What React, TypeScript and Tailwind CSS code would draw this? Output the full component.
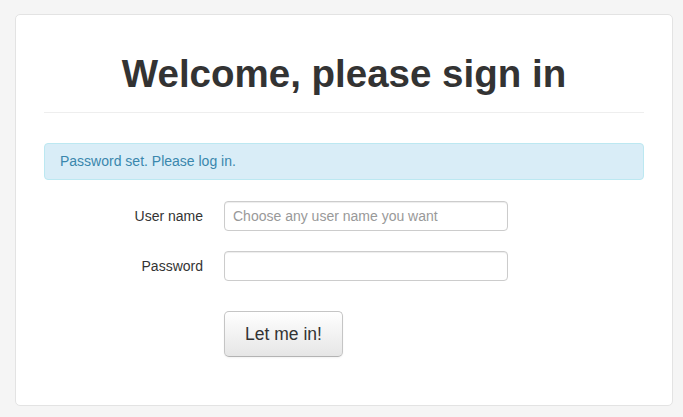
export default function App() {
  return (
    <div
      className="min-h-[417px] bg-[#f5f5f5] pt-[14px] pl-[15px]"
      style={{ fontFamily: '"Liberation Sans", Arial, sans-serif' }}
    >
      <div className="w-[658px] h-[392px] bg-white border border-[#e3e3e3] rounded-[5px] px-[28px] pt-[39px]">
        {/* Heading */}
        <h1 className="text-center text-[38.5px] leading-[40px] font-bold text-[#333]">
          Welcome, please sign in
        </h1>
        <div className="mt-[18px] h-px bg-[#eeeeee]" />

        {/* Alert */}
        <div className="mt-[30px] h-[37px] flex items-center px-[15px] bg-[#d9edf7] border border-[#bce8f1] rounded-[4px] text-[14px] text-[#3a87ad]">
          Password set. Please log in.
        </div>

        {/* Form */}
        <div className="mt-[21px] flex flex-col gap-[20px]">
          <div className="flex items-center">
            <label className="w-[160px] text-right pr-px text-[14px] text-[#333]">
              User name
            </label>
            <input
              className="ml-[20px] w-[284px] h-[30px] px-[8px] border border-[#ccc] rounded-[4px] text-[14px] text-[#555] placeholder:text-[#999] shadow-[inset_0_1px_1px_rgba(0,0,0,0.075)] outline-none"
              placeholder="Choose any user name you want"
            />
          </div>
          <div className="flex items-center">
            <label className="w-[160px] text-right pr-px text-[14px] text-[#333]">
              Password
            </label>
            <input
              type="password"
              className="ml-[20px] w-[284px] h-[30px] px-[8px] border border-[#ccc] rounded-[4px] text-[14px] text-[#555] shadow-[inset_0_1px_1px_rgba(0,0,0,0.075)] outline-none"
            />
          </div>
        </div>

        <div className="mt-[30px] pl-[180px]">
          <button className="w-[119px] h-[46px] rounded-[5px] border border-[#c5c5c5] border-b-[#b3b3b3] bg-gradient-to-b from-white to-[#e6e6e6] text-[17.5px] text-[#333] shadow-[inset_0_1px_0_rgba(255,255,255,0.2),0_1px_2px_rgba(0,0,0,0.05)]">
            Let me in!
          </button>
        </div>
      </div>
    </div>
  );
}
